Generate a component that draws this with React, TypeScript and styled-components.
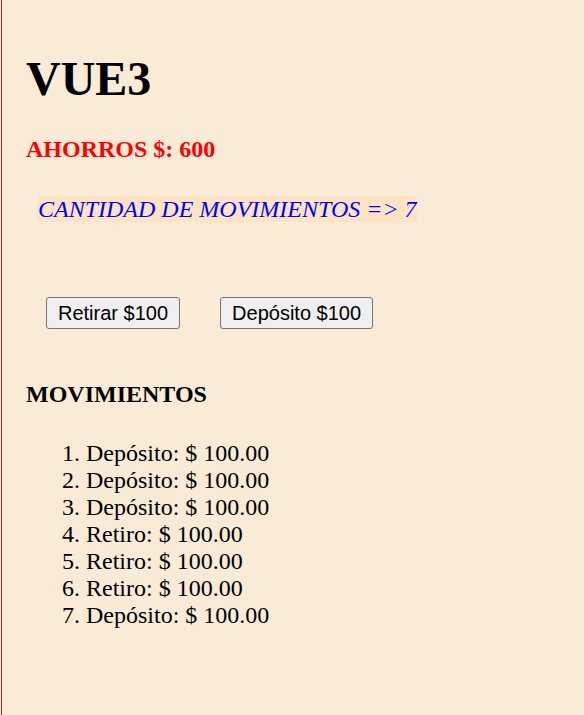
import React from "react";
import styled, { createGlobalStyle } from "styled-components";

const GlobalStyle = createGlobalStyle`
  html, body {
    margin: 0;
    padding: 0;
    background: #faebd7;
  }
  body {
    font-family: "Liberation Serif", "Times New Roman", serif;
    color: #000;
  }
`;

const Page = styled.div`
  min-height: 100vh;
  margin-left: 1px;
  border-left: 1px solid #a52a2a;
  padding: 51px 0 0 24px;
  box-sizing: border-box;
`;

const Title = styled.h1`
  margin: 0;
  font-size: 48px;
  font-weight: bold;
  line-height: normal;
`;

const Savings = styled.h2`
  margin: 30px 0 0;
  font-size: 24px;
  font-weight: bold;
  line-height: normal;
  color: #ff0000;
`;

const CountRow = styled.div`
  margin-top: 33px;
  padding-left: 12px;
  font-size: 24px;
  line-height: normal;
`;

const Count = styled.span`
  font-style: italic;
  color: #0000ff;
  background: #ffe4c4;
`;

const Actions = styled.div`
  display: flex;
  gap: 40px;
  margin-top: 74px;
  padding-left: 20px;
`;

const ActionButton = styled.button`
  font-family: "Liberation Sans", Arial, sans-serif;
  font-size: 20px;
  line-height: normal;
  padding: 4px 11px 3px;
  color: #000;
  background: #efefef;
  border: 1px solid #767676;
  border-radius: 3px;
`;

const SectionTitle = styled.h2`
  margin: 52px 0 0;
  font-size: 24px;
  font-weight: bold;
  line-height: normal;
`;

const MovementList = styled.ol`
  margin: 32px 0 0 20px;
  padding-left: 40px;
  font-size: 24px;
  line-height: normal;
`;

const Movement = styled.li``;

const movements = [
  "Depósito",
  "Depósito",
  "Depósito",
  "Retiro",
  "Retiro",
  "Retiro",
  "Depósito",
];

export default function App() {
  return (
    <>
      <GlobalStyle />
      <Page>
        <Title>VUE3</Title>
        <Savings>AHORROS $: 600</Savings>
        <CountRow>
          <Count>CANTIDAD DE MOVIMIENTOS =&gt; 7</Count>
        </CountRow>
        <Actions>
          <ActionButton>Retirar $100</ActionButton>
          <ActionButton>Depósito $100</ActionButton>
        </Actions>
        <SectionTitle>MOVIMIENTOS</SectionTitle>
        <MovementList>
          {movements.map((m, i) => (
            <Movement key={i}>
              {m}: $ 100.00
            </Movement>
          ))}
        </MovementList>
      </Page>
    </>
  );
}
